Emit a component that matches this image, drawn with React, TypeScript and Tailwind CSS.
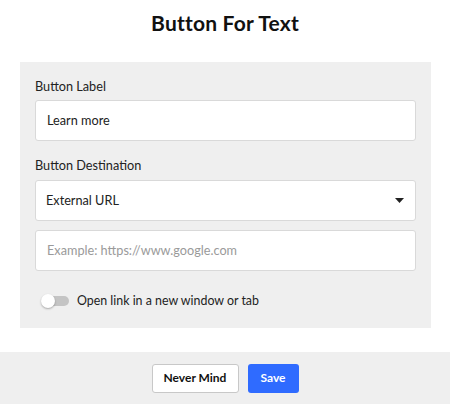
import React from "react";

export default function App() {
  return (
    <div className="w-[450px] h-[404px] bg-white flex flex-col text-[#1a1a1a]" style={{ fontFamily: "Lato, 'Noto Sans', sans-serif" }}>
      <div className="h-[62px] flex items-center justify-center pb-[16px]">
        <h1 className="text-[21px] font-bold tracking-[0.2px] text-[#111]">Button For Text</h1>
      </div>
      <div className="mx-[20px] w-[411px] h-[266px] bg-[#efefef] px-[15px] pt-[16px]">
        <div className="text-[12.7px] leading-[16px] text-[#222] mb-[6px]">Button Label</div>
        <div className="h-[41px] bg-white border border-[#d9d9d9] rounded-[3px] flex items-center px-[11px] text-[12.7px] text-[#222]">Learn more</div>
        <div className="text-[12.7px] leading-[16px] text-[#222] mt-[16px] mb-[7px]">Button Destination</div>
        <div className="h-[41px] bg-white border border-[#d9d9d9] rounded-[3px] flex items-center justify-between pl-[10px] pr-[11px] text-[12.7px] text-[#222]">
          <span>External URL</span>
          <svg width="9" height="5" viewBox="0 0 9 5"><path d="M0 0h9L4.5 5z" fill="#222" /></svg>
        </div>
        <div className="mt-[9px] h-[41px] bg-white border border-[#d9d9d9] rounded-[3px] flex items-center px-[11px] text-[12.7px] text-[#9a9a9a]">Example: https://www.google.com</div>
        <div className="mt-[21px] flex items-center pl-[6px]">
          <div className="relative w-[28px] h-[14px]">
            <div className="absolute left-[4px] top-[2px] w-[24px] h-[10px] rounded-full bg-[#c4c4c4]" />
            <div className="absolute left-0 top-0 w-[14px] h-[14px] rounded-full bg-white shadow-[0_1px_2px_rgba(0,0,0,0.3)]" />
          </div>
          <span className="ml-[8px] text-[12.4px] text-[#222]">Open link in a new window or tab</span>
        </div>
      </div>
      <div className="flex-1" />
      <div className="h-[52px] bg-[#efefef] flex items-center justify-center gap-[9px]">
        <button className="h-[29px] w-[87px] bg-white border border-[#c8c8c8] rounded-[3px] text-[12px] font-bold text-[#111]">Never Mind</button>
        <button className="h-[29px] w-[51px] bg-[#2f6bff] rounded-[3px] text-[12px] font-bold text-white">Save</button>
      </div>
    </div>
  );
}
